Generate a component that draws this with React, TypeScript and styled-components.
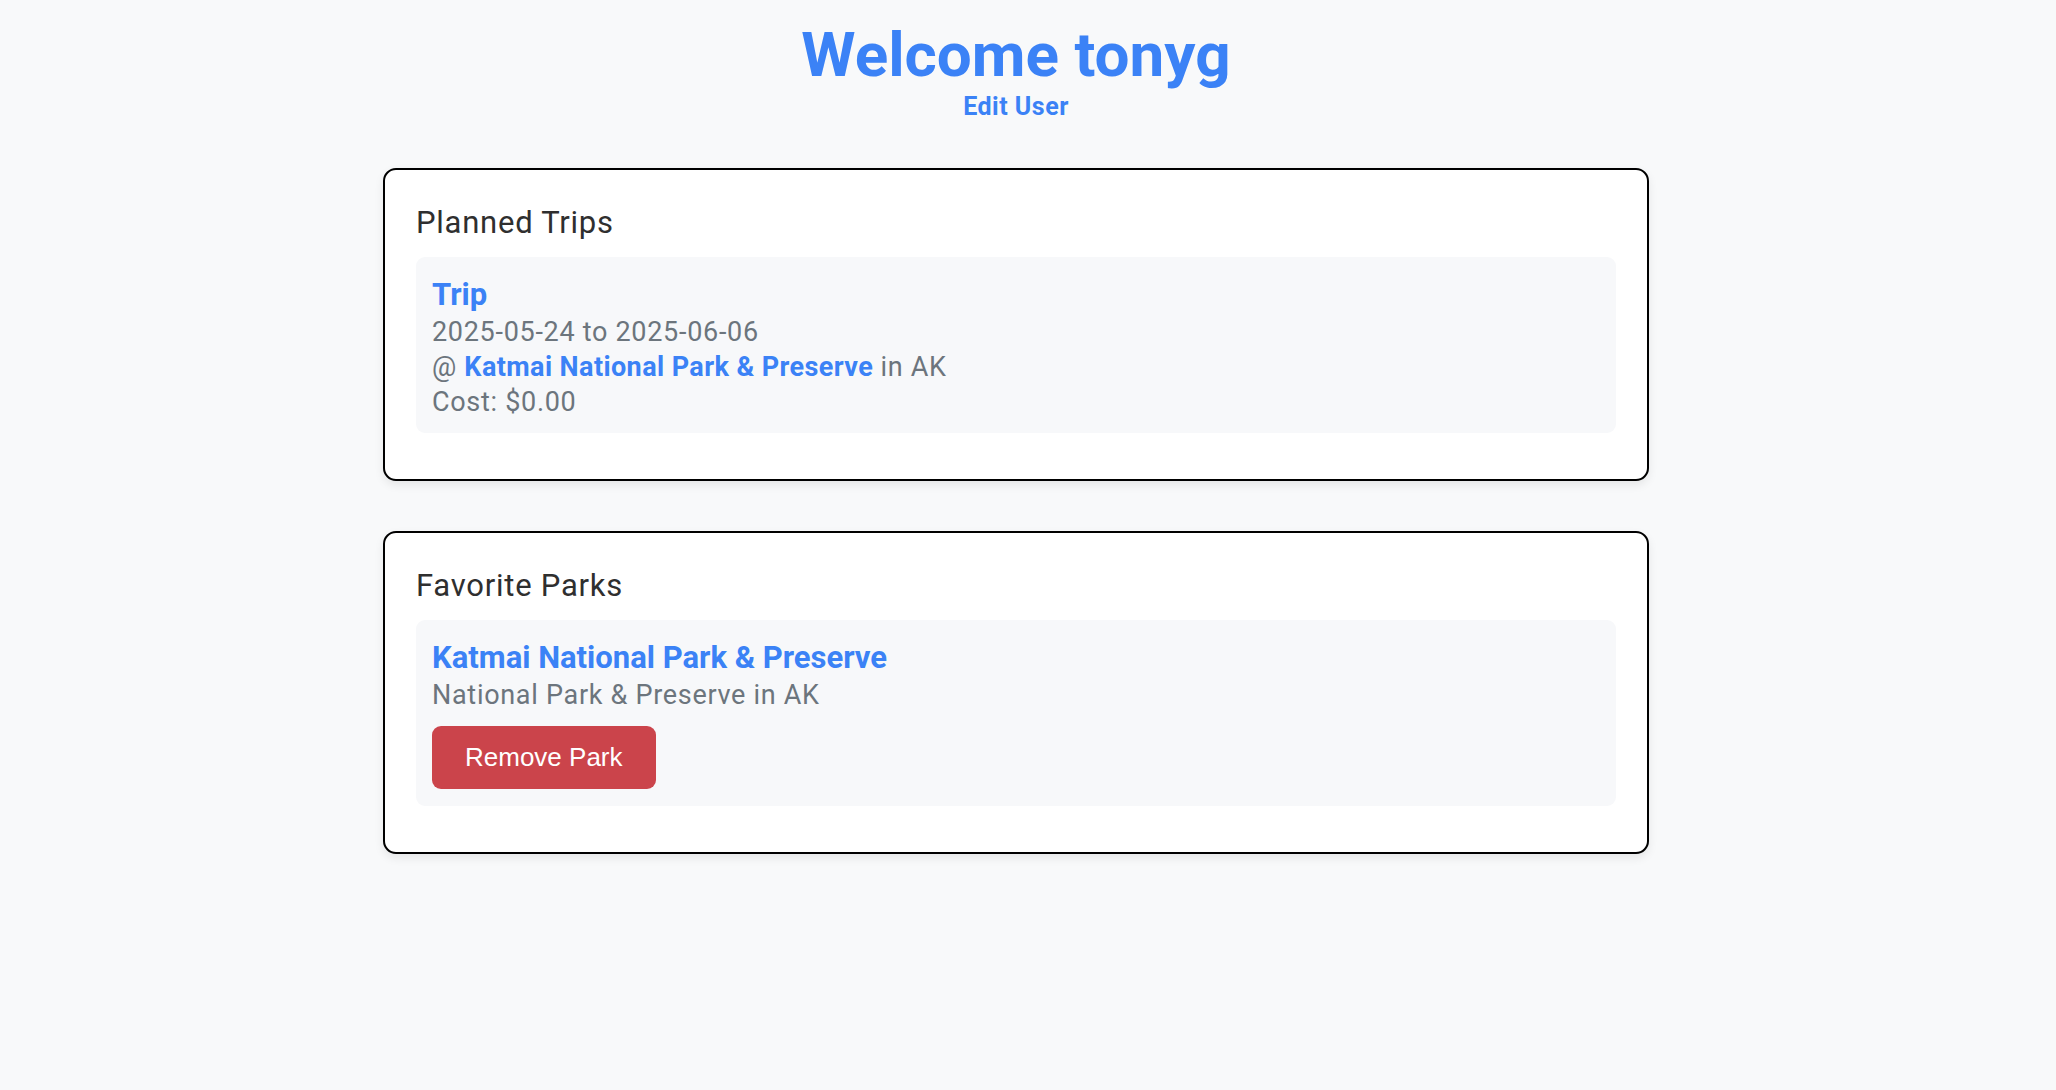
import React from "react";
import styled, { createGlobalStyle } from "styled-components";

const GlobalStyle = createGlobalStyle`
  html, body {
    margin: 0;
    padding: 0;
    background: #f8f9fa;
    font-family: Roboto, "Noto Sans", sans-serif;
  }
`;

const Page = styled.div`
  padding: 0 24px 40px 0;
  display: flex;
  flex-direction: column;
  align-items: center;
`;

const Header = styled.header`
  display: flex;
  flex-direction: column;
  align-items: center;
  margin-top: 21px;
`;

const Title = styled.h1`
  margin: 0;
  font-size: 62px;
  line-height: 68px;
  font-weight: 700;
  color: #3b82f6;
`;

const EditLink = styled.a`
  margin-top: 3px;
  font-size: 25px;
  line-height: 29px;
  font-weight: 700;
  letter-spacing: 0.5px;
  color: #3b82f6;
  text-decoration: none;
`;

const Cards = styled.main`
  width: 1266px;
  margin-top: 47px;
  display: flex;
  flex-direction: column;
  gap: 50px;
`;

const Card = styled.section`
  box-sizing: border-box;
  background: #ffffff;
  border: 2px solid #000;
  border-radius: 13px;
  padding: 32.5px 31px 31px;
  box-shadow: 0 4px 10px rgba(0, 0, 0, 0.08);
`;

const CardTitle = styled.h2`
  margin: 0 0 14px;
  font-size: 31px;
  line-height: 40.5px;
  font-weight: 400;
  letter-spacing: 0.75px;
  color: #2f2f2f;
`;

const Item = styled.div`
  background: #f7f8fa;
  border-radius: 9px;
  padding: 19px 16px 13px;
  margin-bottom: 15px;
  display: flex;
  flex-direction: column;
  align-items: flex-start;
`;

const ItemTitle = styled.a`
  font-size: 31px;
  line-height: 37px;
  font-weight: 700;
  color: #3b82f6;
  text-decoration: none;
  margin-bottom: 2px;
`;

const Line = styled.div`
  font-size: 27px;
  line-height: 35px;
  letter-spacing: 0.7px;
  color: #6c757d;
`;

const InlineLink = styled.a`
  font-weight: 700;
  letter-spacing: 0.4px;
  color: #3b82f6;
  text-decoration: none;
`;

const DangerButton = styled.button`
  margin: 13px 0 4px;
  height: 63px;
  padding: 0 33px;
  border: none;
  border-radius: 9px;
  background: #cb444b;
  color: #ffffff;
  font-family: "Liberation Sans", Arial, sans-serif;
  font-size: 26px;
  cursor: pointer;
`;

export default function App() {
  return (
    <>
      <GlobalStyle />
      <Page>
        <Header>
          <Title>Welcome tonyg</Title>
          <EditLink href="#">Edit User</EditLink>
        </Header>
        <Cards>
          <Card>
            <CardTitle>Planned Trips</CardTitle>
            <Item>
              <ItemTitle href="#">Trip</ItemTitle>
              <Line>2025-05-24 to 2025-06-06</Line>
              <Line>
                @ <InlineLink href="#">Katmai National Park &amp; Preserve</InlineLink> in AK
              </Line>
              <Line>Cost: $0.00</Line>
            </Item>
          </Card>
          <Card>
            <CardTitle>Favorite Parks</CardTitle>
            <Item>
              <ItemTitle href="#">Katmai National Park &amp; Preserve</ItemTitle>
              <Line>National Park &amp; Preserve in AK</Line>
              <DangerButton>Remove Park</DangerButton>
            </Item>
          </Card>
        </Cards>
      </Page>
    </>
  );
}
